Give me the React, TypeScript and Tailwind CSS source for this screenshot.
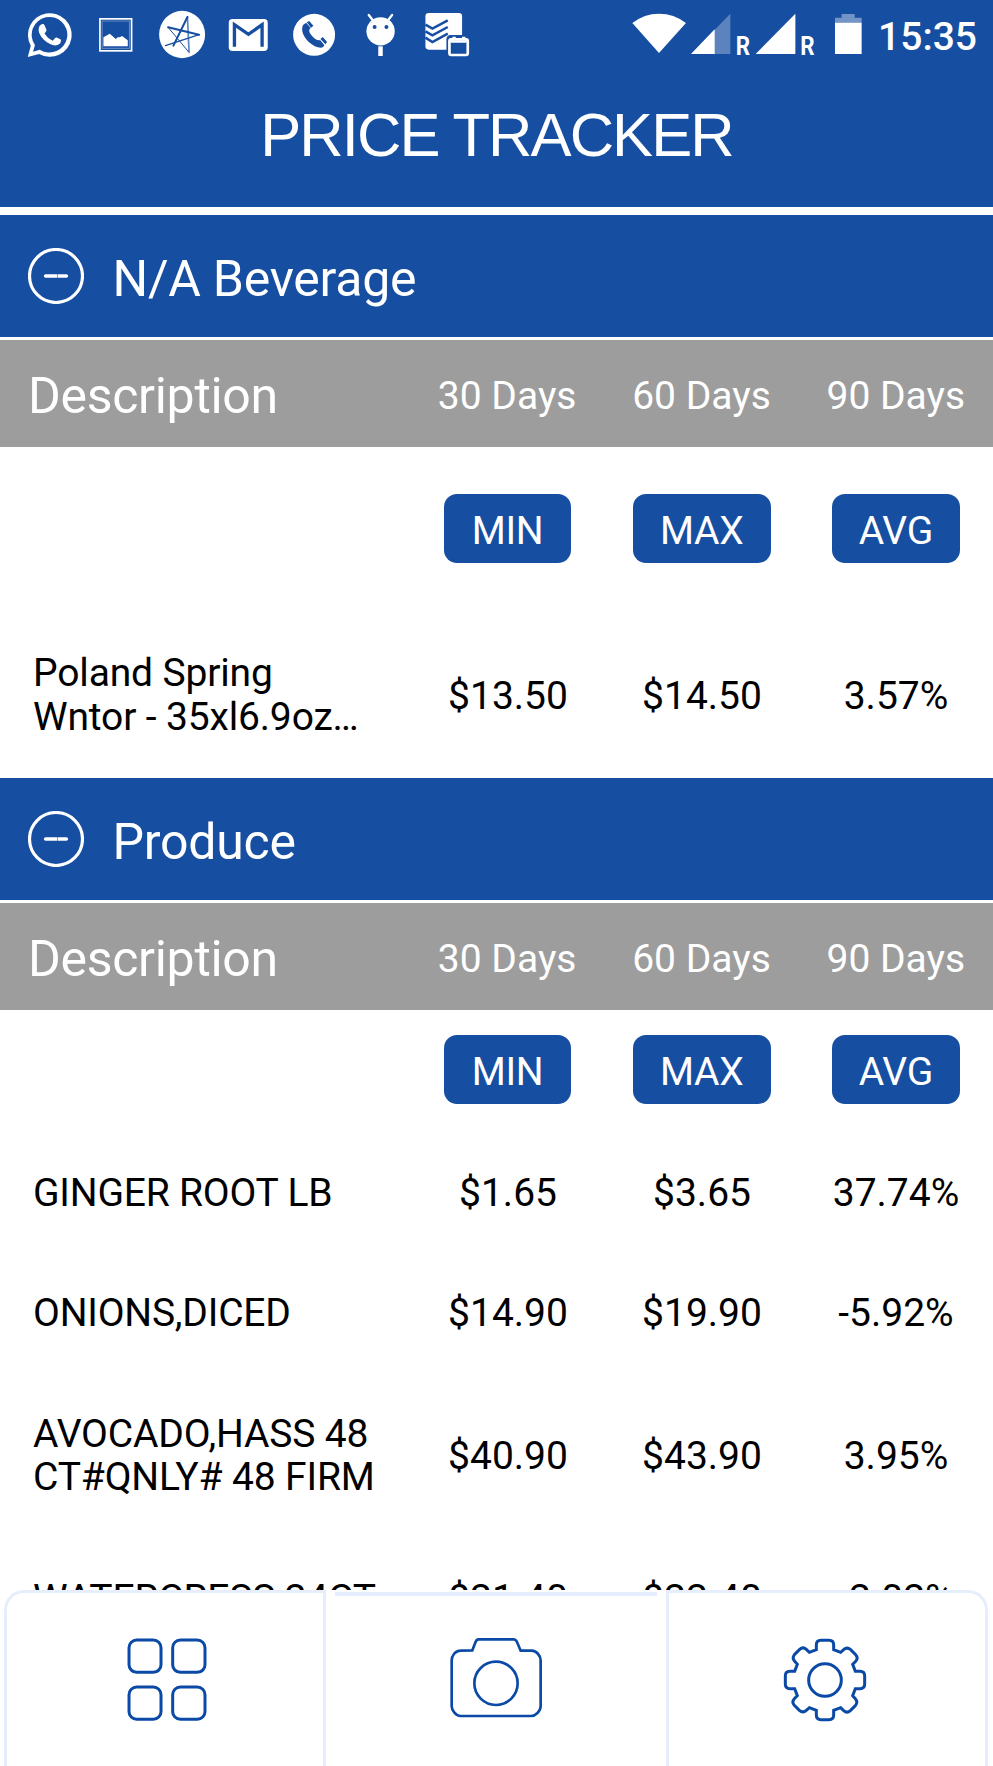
import React from "react";

type Item = { name: string; min: string; max: string; avg: string };

const beverages: Item[] = [
  {
    name: "Poland Spring Wntor - 35xl6.9oz…",
    min: "$13.50",
    max: "$14.50",
    avg: "3.57%",
  },
];

const produce: Item[] = [
  { name: "GINGER ROOT LB", min: "$1.65", max: "$3.65", avg: "37.74%" },
  { name: "ONIONS,DICED", min: "$14.90", max: "$19.90", avg: "-5.92%" },
  {
    name: "AVOCADO,HASS 48 CT#QNLY# 48 FIRM",
    min: "$40.90",
    max: "$43.90",
    avg: "3.95%",
  },
  { name: "WATERCRESS 24CT", min: "$21.40", max: "$22.40", avg: "-2.02%" },
];

const StatusIcon: React.FC<{ x: number; children: React.ReactNode }> = ({
  x,
  children,
}) => (
  <svg
    viewBox={`${x - 99.3} 30 198.6 150`}
    className="w-[66.2px] h-[50px] shrink-0"
    fill="#fff"
  >
    {children}
  </svg>
);

const StatusBar: React.FC = () => {
  return (
    <div className="flex items-start justify-between pt-[10px] pl-[16.5px] pr-[16px]">
      <div className="flex">
        <StatusIcon x={150}>
          <path
            fillRule="evenodd"
            d="M83 171 L92 137 A65.500 65.500 0 1 1 117 162 Z M99 155 L119 149 A53.500 53.500 0 1 0 104.500 135 Z"
          />
          <path d="M122 74 C128 71 132 72 134 77 L139 89 C140 93 137 96 133 100 C139 110 147 118 158 122 L165 114 C167 112 169 112 171 113 L181 118 C184 120 183 128 178 132 C170 138 160 137 150 132 C135 125 124 114 117 98 C114 88 116 78 122 74 Z" />
        </StatusIcon>
        <StatusIcon x={348}>
          <rect x="299.5" y="56.500" width="95" height="96" fill="none" stroke="#fff" strokeWidth="5" />
          <rect x="306" y="63" width="82" height="82" fill="none" stroke="#fff" strokeOpacity="0.35" strokeWidth="3" />
          <path d="M310 139 V112 L329 101 L347 117 L353 112 H359 L366 108 L383 121 V139 Z" />
        </StatusIcon>
        <StatusIcon x={546}>
          <ellipse cx="546" cy="103.500" rx="69" ry="71" />
          <g fill="none" stroke="#164ea2" strokeLinecap="round">
            <path d="M562 51 L520 137" strokeWidth="6" />
            <path d="M504 82 L597 104" strokeWidth="6" />
            <path d="M597 104 L496 137" strokeWidth="4" />
            <path d="M504 82 L565 155" strokeWidth="3" />
            <path d="M562 51 L567 157" strokeWidth="5" strokeOpacity="0.7" />
          </g>
        </StatusIcon>
        <StatusIcon x={745}>
          <rect x="687" y="57" width="117" height="96" rx="11" />
          <path
            d="M704 140 V74 L746 103 L787 74 V140"
            fill="none"
            stroke="#164ea2"
            strokeWidth="10"
          />
        </StatusIcon>
        <StatusIcon x={942}>
          <circle cx="942" cy="104.500" r="63" />
          <g fill="#164ea2">
            <path d="M909 75 L918 68 L932 84 C923 90 929 101 938 110 C946 118 953 123 960 120 L973 136 L968 142 C958 146 940 139 926 126 C908 109 902 88 909 75 Z" />
            <path d="M920 67 L927 63 L940 77 L933 83 Z M961 117 L968 111 L981 126 L976 133 Z" />
          </g>
        </StatusIcon>
        <StatusIcon x={1141}>
          <circle cx="1142.500" cy="94" r="42.500" />
          <path
            d="M1107 45 L1118 59 M1177 45 L1166 59"
            stroke="#fff"
            strokeWidth="7"
            strokeLinecap="round"
          />
          <circle cx="1124.500" cy="81" r="6" fill="#164ea2" />
          <circle cx="1160" cy="81" r="6" fill="#164ea2" />
          <path d="M1135.500 139 H1149 V168 H1135.500 Z" />
        </StatusIcon>
        <StatusIcon x={1341}>
          <rect x="1276" y="39" width="110" height="110" rx="10" />
          <path
            d="M1276 74 L1297 86 L1343 61 M1276 94 L1297 106 L1343 81 M1276 113 L1297 126 L1343 101"
            fill="none"
            stroke="#164ea2"
            strokeWidth="7.500"
          />
          <path d="M1339 174 V118 Q1339 107 1350 105 H1402 Q1412 108 1412 118 V174 Z" fill="#164ea2" />
          <rect x="1348" y="118" width="55" height="47" rx="5" fill="none" stroke="#fff" strokeWidth="8" />
          <path d="M1351 121 H1400 V128 H1351 Z M1357 110 H1367 V118 H1357 Z M1386 110 H1396 V118 H1386 Z" />
        </StatusIcon>
      </div>
      <div className="flex items-start">
        <svg viewBox="1896 30 166 150" className="w-[55.300px] h-[50px]" fill="#fff">
          <path d="M1977 159 L1897 69 Q1933 41 1977 41 Q2022 41 2058 69 Z" />
        </svg>
        <svg viewBox="2060 30 200 150" className="w-[66.7px] h-[50px]" fill="#fff">
          <path d="M2072 162 L2190 41 V162 Z" fillOpacity="0.3" />
          <path d="M2072 162 L2143 88 V162 Z" />
          <text x="2206" y="164" className="font-[Roboto,sans-serif] font-bold text-[78px]" textLength="43" lengthAdjust="spacingAndGlyphs">R</text>
        </svg>
        <svg viewBox="2260 30 200 150" className="w-[66.7px] h-[50px]" fill="#fff">
          <path d="M2265 162 L2384 41 V162 Z" />
          <text x="2399" y="164" className="font-[Roboto,sans-serif] font-bold text-[78px]" textLength="43" lengthAdjust="spacingAndGlyphs">R</text>
        </svg>
        <svg viewBox="2460 30 160 150" className="w-[53.300px] h-[50px]" fill="#fff">
          <path d="M2505 68 V53 H2525 V42 H2564 V53 H2585 V68 Z" fillOpacity="0.4" />
          <path d="M2505 68 H2585 V162 H2505 Z" />
        </svg>
        <span className="ml-[4.500px] mt-[4px] text-[39px] leading-[46px] font-medium text-white">
          15:35
        </span>
      </div>
    </div>
  );
};

const SectionHeader: React.FC<{ title: string }> = ({ title }) => {
  return (
    <div className="flex items-center h-[122px] shrink-0 bg-[#164ea2] pl-[28px]">
      <svg viewBox="0 0 168 168" className="w-[56px] h-[56px]" fill="none" stroke="#fff">
        <circle cx="84" cy="84" r="79.500" strokeWidth="9.500" />
        <path d="M53 84 H115" strokeWidth="11" strokeLinecap="round" />
        <path d="M88.500 77 V91" stroke="#164ea2" strokeWidth="1.500" />
      </svg>
      <span className="ml-[28.500px] mt-[6px] text-[50px] leading-[60px] tracking-[-0.250px] text-white">
        {title}
      </span>
    </div>
  );
};

const ColumnHeader: React.FC = () => {
  return (
    <div className="flex items-center h-[107.500px] shrink-0 mt-[2.500px] bg-[#9d9d9d] text-white">
      <div className="w-[410px] pl-[28px] pt-[6px] text-[50px] leading-[60px] tracking-[-0.300px]">
        Description
      </div>
      <div className="grid grid-cols-3 flex-1 text-center text-[39px] leading-[46px] pt-[5px]">
        <span>30 Days</span>
        <span>60 Days</span>
        <span>90 Days</span>
      </div>
    </div>
  );
};

const Badge: React.FC<{ children: string }> = ({ children }) => (
  <div className="h-[69px] rounded-[13px] bg-[#164ea2] px-[27.300px] pt-[2px] text-[39px] leading-[71px] tracking-[-0.250px] text-white">
    {children}
  </div>
);

const Badges: React.FC<{ className: string }> = ({ className }) => {
  return (
    <div className={`flex shrink-0 pl-[410.500px] ${className}`}>
      <div className="grid grid-cols-3 flex-1 justify-items-center">
        <Badge>MIN</Badge>
        <Badge>MAX</Badge>
        <Badge>AVG</Badge>
      </div>
    </div>
  );
};

const Row: React.FC<{ item: Item }> = ({ item }) => {
  // names that wrap onto a second line get a slightly taller row
  const wraps = item.name.length > 20;

  return (
    <div
      className={`flex items-center shrink-0 pt-[2px] text-[39px] leading-[43.300px] text-black ${
        wraps ? "h-[166px]" : "h-[120.300px]"
      }`}
    >
      <div
        className={`w-[410px] pl-[33px] pr-[30px] ${
          wraps ? "pb-[1px] tracking-[-0.150px]" : "tracking-[-0.200px]"
        }`}
      >
        {item.name}
      </div>
      <div
        className={`grid grid-cols-3 flex-1 text-center pl-[1px] ${
          wraps ? "pt-[1px]" : ""
        }`}
      >
        <span>{item.min}</span>
        <span>{item.max}</span>
        <span>{item.avg}</span>
      </div>
    </div>
  );
};

const BottomNav: React.FC = () => {
  return (
    <div className="flex h-[176px] shrink-0 bg-white pl-[4px] pr-[5px]">
      <button className="w-[322px] flex items-start border-[3.500px] border-b-0 border-[#e6eefd] rounded-tl-[20px] pl-[120px] pt-[45px]">
        <svg viewBox="0 0 242 250" className="w-[80.700px] h-[83.300px]" fill="none" stroke="#0a49a6" strokeWidth="9">
          <rect x="6" y="6" width="96" height="97" rx="23" />
          <rect x="137" y="6" width="97" height="97" rx="23" />
          <rect x="6" y="147" width="96" height="97" rx="23" />
          <rect x="137" y="147" width="97" height="97" rx="23" />
        </svg>
      </button>
      <button className="flex-1 flex flex-col items-center pt-[2px]">
        <span className="h-[4px] w-[322px] bg-[#e6eefd]" />
        <svg viewBox="386 232 282 244" className="mt-[41.300px] w-[94px] h-[81.300px]" fill="none" stroke="#0a49a6" strokeWidth="8">
          <path d="M456 272 L466 246 Q469 239 475 239 H580 Q586 239 589 245 L601 273 H635 C648 273 661 288 661 302 V440 C661 455 645 469 633 469 H420 C407 469 394 452 394 440 V302 C394 288 405 273 420 273 Z" />
          <circle cx="527" cy="371" r="65" />
        </svg>
      </button>
      <button className="w-[322px] flex items-start border-[3.500px] border-b-0 border-[#e6eefd] rounded-tr-[20px] pl-[114px] pt-[45px]">
        <svg viewBox="-126 -126 252 252" className="w-[84px] h-[84px]" fill="none" stroke="#0a49a6" strokeWidth="9">
          <path d="M-26 -91 V-105 Q-26 -119 -12 -119 H12 Q26 -119 26 -105 V-91 L47 -83 L56 -91 Q66 -100 77 -91 L92 -76 Q101 -66 92 -56 L83 -47 L91 -26 H105 Q119 -26 119 -12 V12 Q119 26 105 26 H91 L83 47 L91 56 Q100 66 91 77 L76 92 Q66 101 56 92 L47 83 L26 91 V105 Q26 119 12 119 H-12 Q-26 119 -26 105 V91 L-47 83 L-56 91 Q-66 100 -77 91 L-92 76 Q-101 66 -92 56 L-83 47 L-91 26 H-105 Q-119 26 -119 12 V-12 Q-119 -26 -105 -26 H-91 L-83 -47 L-91 -56 Q-100 -66 -91 -77 L-76 -92 Q-66 -101 -56 -92 L-47 -83 Z" />
          <circle cx="0" cy="0" r="49" />
        </svg>
      </button>
    </div>
  );
};

const App: React.FC = () => {
  return (
    <div className="flex flex-col w-[993px] h-[1766px] overflow-hidden bg-white font-[Roboto,sans-serif]">
      <div className="h-[207px] shrink-0 bg-[#164ea2]">
        <StatusBar />
        <div className="mt-[40px] text-center font-['Liberation_Sans',Arial,sans-serif] text-[61.500px] leading-[70px] tracking-[-1.950px] text-white">
          PRICE TRACKER
        </div>
      </div>
      <div className="flex flex-col flex-1 min-h-0 overflow-hidden pt-[8px]">
        <SectionHeader title="N/A Beverage" />
        <ColumnHeader />
        <Badges className="pt-[47px] pb-[49px]" />
        {beverages.map((item) => (
          <Row key={item.name} item={item} />
        ))}
        <SectionHeader title="Produce" />
        <ColumnHeader />
        <Badges className="pt-[25px] pb-[28px]" />
        {produce.map((item) => (
          <Row key={item.name} item={item} />
        ))}
      </div>
      <BottomNav />
    </div>
  );
};

export default App;
